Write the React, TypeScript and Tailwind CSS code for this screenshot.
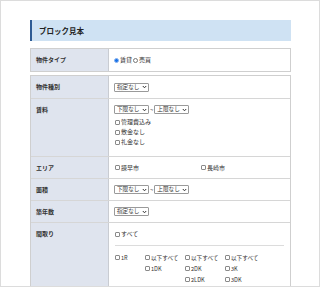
const FONT = "font-['Noto_Sans_CJK_JP','Noto_Sans',sans-serif]";

function Check({ label }: { label: string }) {
  return (
    <span className="inline-flex items-center whitespace-nowrap">
      <span className="mr-[1px] inline-block h-[5px] w-[5px] shrink-0 rounded-[1px] border border-[#8a8a8a] bg-white" />
      {label}
    </span>
  );
}

function Select({ label }: { label: string }) {
  return (
    <span className="inline-flex h-[9px] w-[35px] items-center justify-between rounded-[1px] border border-[#9a9a9a] bg-white pl-[2px] pr-[1px] text-[5.6px] leading-[7px]">
      <span className="whitespace-nowrap">{label}</span>
      <svg width="5" height="4" viewBox="0 0 5 4" className="shrink-0">
        <path d="M0.8 1 L2.5 2.8 L4.2 1" fill="none" stroke="#333" strokeWidth="1" />
      </svg>
    </span>
  );
}

function Label({ children, pt }: { children: React.ReactNode; pt: string }) {
  return (
    <div className={`border-r border-[#c9ccd2] bg-[#dfe4ee] pl-[5px] font-bold text-[#333] ${pt}`}>
      {children}
    </div>
  );
}

export default function App() {
  return (
    <div className={`h-[287px] w-[320px] overflow-hidden border border-[#dcdcdc] bg-white ${FONT} text-[6px] leading-[8px] text-[#333]`}>
      <div className="ml-[29px] mt-[19px] w-[261px]">
        <div className="flex h-[21px] items-center border-l-2 border-[#2d5b94] bg-[#cfe2f3] pl-[7px] text-[7.5px] font-bold text-[#222]">
          ブロック見本
        </div>

        <div className="mt-[7px] grid h-[24px] grid-cols-[78px_1fr] border border-[#cfcfcf]">
          <Label pt="pt-[7px]">物件タイプ</Label>
          <div className="flex items-center pl-[5px]">
            <span className="mr-[1px] inline-block h-[5px] w-[5px] rounded-full border border-[#8ab4f0] bg-[#1a73e8]" />
            賃貸
            <span className="mx-[1px] inline-block h-[5px] w-[5px] rounded-full border border-[#777] bg-white" />
            売買
          </div>
        </div>

        <div className="mt-[3px] border border-[#cfcfcf]">
          <div className="grid h-[23px] grid-cols-[78px_1fr] border-b border-[#d6d6d6]">
            <Label pt="pt-[7px]">物件種別</Label>
            <div className="flex items-center pl-[5px]">
              <Select label="指定なし" />
            </div>
          </div>

          <div className="grid h-[58px] grid-cols-[78px_1fr] border-b border-[#d6d6d6]">
            <Label pt="pt-[7px]">賃料</Label>
            <div className="flex flex-col pl-[5px] pt-[6px]">
              <div className="flex items-center gap-[1px]">
                <Select label="下限なし" />
                <span>~</span>
                <Select label="上限なし" />
              </div>
              <div className="mt-[4px] flex flex-col gap-[2px] pl-[1px]">
                <Check label="管理費込み" />
                <Check label="敷金なし" />
                <Check label="礼金なし" />
              </div>
            </div>
          </div>

          <div className="grid h-[22px] grid-cols-[78px_1fr] border-b border-[#d6d6d6]">
            <Label pt="pt-[7px]">エリア</Label>
            <div className="grid grid-cols-[86px_1fr] items-center pl-[6px]">
              <Check label="諫早市" />
              <Check label="長崎市" />
            </div>
          </div>

          <div className="grid h-[22px] grid-cols-[78px_1fr] border-b border-[#d6d6d6]">
            <Label pt="pt-[7px]">面積</Label>
            <div className="flex items-center gap-[1px] pl-[5px]">
              <Select label="下限なし" />
              <span>~</span>
              <Select label="上限なし" />
            </div>
          </div>

          <div className="grid h-[22px] grid-cols-[78px_1fr] border-b border-[#d6d6d6]">
            <Label pt="pt-[7px]">築年数</Label>
            <div className="flex items-center pl-[5px]">
              <Select label="指定なし" />
            </div>
          </div>

          <div className="grid h-[80px] grid-cols-[78px_1fr]">
            <Label pt="pt-[7px]">間取り</Label>
            <div className="pl-[6px] pr-[6px] pt-[7px]">
              <Check label="すべて" />
              <div className="mt-[6px] border-t border-[#dcdcdc]" />
              <div className="mt-[8px] grid grid-cols-[30px_40px_40px_40px] gap-y-[3px] text-[5.6px]">
                <Check label="1R" />
                <Check label="以下すべて" />
                <Check label="以下すべて" />
                <Check label="以下すべて" />
                <span />
                <Check label="1DK" />
                <Check label="2DK" />
                <Check label="3K" />
                <span />
                <span />
                <Check label="2LDK" />
                <Check label="3DK" />
                <span />
                <span />
                <span />
                <Check label="3LDK" />
              </div>
            </div>
          </div>
        </div>
      </div>
    </div>
  );
}
